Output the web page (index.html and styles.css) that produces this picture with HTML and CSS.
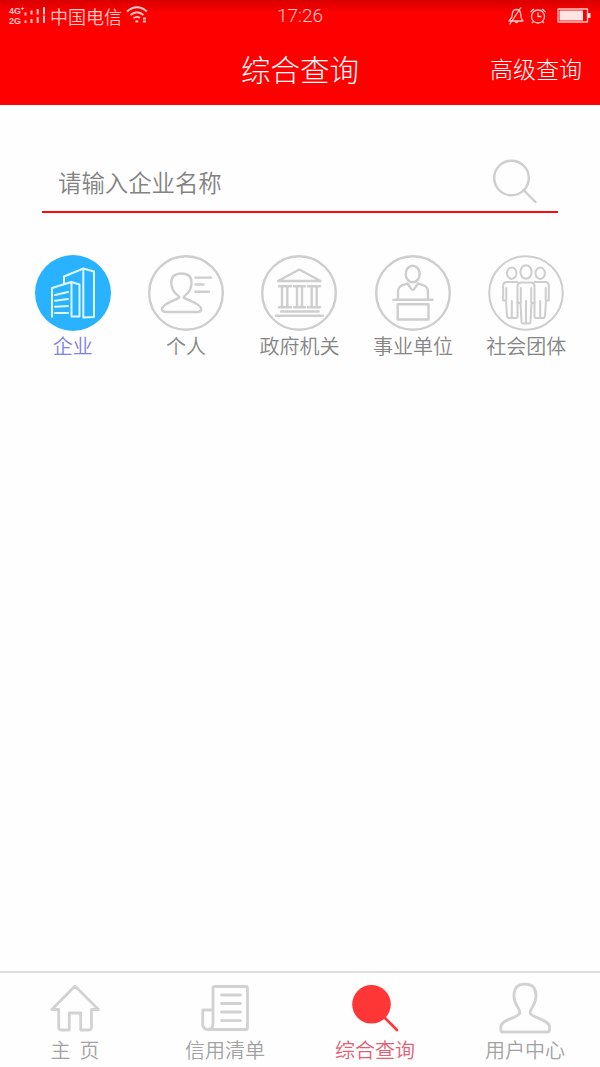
FILE: index.html
```html
<!DOCTYPE html>
<html lang="zh-CN">
    <head>
        <meta charset="UTF-8">
        <meta name="viewport" content="width=device-width, initial-scale=1.0">

        <title>综合查询</title>
        <link rel="stylesheet" href="styles.css">
    </head>
    <body>
        <div class="status-bar">
            <div class="status-left">
                <div class="network"><span>4G⁺</span><span>2G</span></div>
                <svg class="signal" width="24" height="20" viewBox="0 0 24 20">
                    <path d="M1.500 6.500v3M1.500 14.500v2.500M7.500 4.500v4M7.500 13v4M13.700 3v5.500M13.700 11v6M20 1v7.500M20 9.500v7.500"/>
                </svg>
                <span class="carrier">中国电信</span>
                <svg class="wifi" width="22" height="20" viewBox="0 0 22 20">
                    <path d="M1 5.500Q11-3 21 5.500M4.500 9Q11 3.500 17.500 9M7.500 12.300Q11 9.500 14 12"/>
                    <path d="M9.300 15.500h3M17 12.500h3M17 15.500h3"/>
                </svg>
            </div>
            <span class="time">17:26</span>
            <div class="status-right">
                <svg width="18" height="18" viewBox="0 0 18 18">
                    <path d="M2 14h14c-2-2-2.300-3-2.300-6.500C13.700 4 12 2.500 9.500 2.500S5.300 4 5.300 7.500C5.300 11 4 12 2 14zM8 14.500q1.500 2 3 0M14 .5 2.500 17.500"/>
                </svg>
                <svg width="18" height="18" viewBox="0 0 18 18">
                    <circle cx="9" cy="9.500" r="6.500"/>
                    <path d="M9 5.500v4h3.500M1.500 5 5 2M16.500 5 13 2M4.500 14.500 3 16M13.500 14.500 15 16"/>
                </svg>
                <svg class="battery" width="34" height="16" viewBox="0 0 34 16">
                    <rect x="1" y="1" width="29.500" height="13"/>
                    <path class="level" d="M2.500 2.500h23.500v10h-23.500zM31 5h2.500v5H31z"/>
                </svg>
            </div>
        </div>
        <header>
            <h1>综合查询</h1>
            <a href="#">高级查询</a>
        </header>
        <main>
            <form class="search">
                <input type="text" placeholder="请输入企业名称">
                <svg width="46" height="46" viewBox="0 0 46 46">
                    <circle cx="19.500" cy="20" r="17.300"/>
                    <path d="M31.500 32 43.500 44"/>
                </svg>
            </form>
            <ul class="types">
                <li class="active">
                    <svg width="76" height="76" viewBox="0 0 76 76">
                        <circle class="disc" cx="38" cy="38" r="38"/>
                        <path d="M29 28.300V21.500L48.300 13.500 59 16.500V62L48.300 62.500V13.500M17 61.700V33L36.300 27 44.500 29.500V61.500H36.500V27"/>
                        <path d="M20 40 33 37M20 45.700 33 44M20 51.700 33 51M20 58H33"/>
                    </svg>
                    <span>企业</span>
                </li>
                <li>
                    <svg width="76" height="76" viewBox="0 0 76 76">
                        <circle cx="38" cy="38" r="36.800"/>
                        <path d="M31.300 42.500C31.300 40 23.300 39 23.300 27.500C23.300 21.500 27 18.500 33.400 18.500S43.500 21.500 43.500 27.500C43.500 39 35.700 40 35.700 42.500C37 44.500 53.200 48 53.200 54Q53.200 57 49 57H18.500Q14 57 14 54C14 48 30 44.500 31.300 42.500z"/>
                        <path d="M47.500 22.600H63M47.500 29.500H55.500M47.500 36.700H61"/>
                    </svg>
                    <span>个人</span>
                </li>
                <li>
                    <svg width="76" height="76" viewBox="0 0 76 76">
                        <circle cx="38" cy="38" r="36.800"/>
                        <path d="M17 26 38.300 14.500 59.500 26z"/>
                        <path d="M18 31.200H30M33 31.200H44M47 31.200H59M18 52.200H30M33 52.200H44M47 52.200H59M21 31V52M26.300 31V52M36 31V52M41 31V52M50.700 31V52M55.700 31V52M20 56.500H57.700M15 60.700H62"/>
                    </svg>
                    <span>政府机关</span>
                </li>
                <li>
                    <svg width="76" height="76" viewBox="0 0 76 76">
                        <circle cx="38" cy="38" r="36.800"/>
                        <ellipse cx="37.700" cy="19" rx="7" ry="8.300"/>
                        <path d="M23 43.500V36.500C23 30 29 30 32.500 28.500L36 33.500Q37.800 36.500 39.500 33.500L43 28.500C46.500 30 53 30 53 36.500V43.500M18.500 44.700H57.500M22.700 49.200H53.500V64.500H22.700z"/>
                    </svg>
                    <span>事业单位</span>
                </li>
                <li>
                    <svg class="group" width="76" height="76" viewBox="0 0 76 76">
                        <circle cx="38" cy="38" r="36.800"/>
                        <ellipse cx="23.700" cy="18.200" rx="4.700" ry="5.700"/>
                        <ellipse cx="52.200" cy="18.200" rx="4.700" ry="5.700"/>
                        <path d="M29.500 27H18.500Q15.200 27 15.200 30.500V45.500H18L19 61Q19.200 63 21 63H28Q29.500 63 29.500 61V47M46.500 27H57.500Q60.800 27 60.800 30.500V45.500H58L57 61Q56.800 63 55 63H48Q46.500 63 46.500 61V47M18.300 33V45M23.800 46V62M57.700 33V45M52.200 46V62"/>
                        <ellipse cx="38" cy="17" rx="5.600" ry="6.700"/>
                        <path d="M33.500 27.500Q29.500 27.500 29.500 31V48H32.500L33.500 66.500Q33.600 68.500 35 68.500H41Q42.400 68.500 42.500 66.500L43.500 48H46.500V31Q46.500 27.500 42.500 27.500zM38 46V68M32.800 33V48M43.200 33V48"/>
                    </svg>
                    <span>社会团体</span>
                </li>
            </ul>
        </main>
        <nav>
            <ul>
                <li><a href="#">
                    <svg width="52" height="52" viewBox="0 0 52 52">
                        <path d="M26 4 2.800 27.500H9.700V45Q9.700 48 12.700 48H20.300V31H31.700V48H39.500Q42.500 48 42.500 45V27.500H49.500z"/>
                    </svg>
                    <span>主&nbsp; 页</span>
                </a></li>
                <li><a href="#">
                    <svg width="52" height="52" viewBox="0 0 52 52">
                        <path d="M14 42V6Q14 4.500 15.500 4.500H47Q48.500 4.500 48.500 6V46Q48.500 47.500 47 47.500H9C5 47.500 3.700 45 3.700 42V28H14M14 42Q14 47.500 9 47.500M22.500 13H41.500M22.500 21.500H41.500M22.500 30H41.500M22.500 38.700H41.500"/>
                    </svg>
                    <span>信用清单</span>
                </a></li>
                <li class="active"><a href="#">
                    <svg width="52" height="52" viewBox="0 0 52 52">
                        <circle class="disc" cx="22.500" cy="22.300" r="19.300"/>
                        <path d="M35 35 48 48"/>
                    </svg>
                    <span>综合查询</span>
                </a></li>
                <li><a href="#">
                    <svg width="52" height="52" viewBox="0 0 52 52">
                        <path d="M20.800 31C21.500 26 15 24 15 14C15 6.500 18 2.200 26 2.200S37 6.500 37 14C37 24 30.500 26 31.200 31C32 36 50.500 37 50.500 45V48Q50.500 50 48.500 50H3.800Q1.800 50 1.800 48V45C1.800 37 20 36 20.800 31z"/>
                    </svg>
                    <span>用户中心</span>
                </a></li>
            </ul>
        </nav>
    </body>
</html>
```
FILE: styles.css
```css
body {
    font-family: "Noto Sans CJK SC", sans-serif;
    font-weight: 350;
    margin: 0;
    height: 1067px;
    display: flex;
    flex-direction: column;
    background-color: #fefefe;
    overflow: hidden;
}

ul {
    list-style-type: none;
    margin: 0;
    padding: 0;
}

a {
    text-decoration: none;
}

svg {
    display: block;
    fill: none;
    stroke: #cecece;
    stroke-width: 2.4;
    stroke-linecap: round;
    stroke-linejoin: round;
}

.status-bar {
    display: grid;
    grid-template-columns: 1fr auto 1fr;
    align-items: center;
    height: 32px;
    padding: 0 9px;
    background: linear-gradient(#d80000, #ff0000 14px);
    color: #ffc9c9;
    font-size: 18px;
    line-height: 32px;
}

.status-bar svg {
    stroke: #ffc9c9;
    stroke-width: 1.3;
    stroke-linecap: butt;
}

.status-left,
.status-right {
    display: flex;
    align-items: center;
}

.status-right {
    justify-content: flex-end;
    gap: 4px;
    height: 30px;
}

.network {
    display: flex;
    flex-direction: column;
    width: 15px;
    padding-bottom: 1px;
    font-family: "Liberation Sans", sans-serif;
    font-size: 9px;
    font-weight: bold;
    line-height: 10px;
}

.status-bar .signal {
    height: 22px;
    stroke-width: 2;
}

.carrier {
    height: 32px;
    margin: 0 4px 0 2px;
    line-height: 32px;
}

.status-bar .wifi {
    stroke-width: 1.8;
}

.time {
    font-family: Roboto, sans-serif;
    font-size: 19px;
    font-weight: 300;
}

.battery .level {
    fill: #ffe4e4;
    stroke: none;
}

.status-right .battery {
    margin-left: 6px;
}

header {
    display: grid;
    grid-template-columns: 1fr auto 1fr;
    align-items: center;
    height: 71px;
    padding: 0 18px 2px;
    background-color: #ff0000;
    color: white;
    font-weight: 300;
}

header h1 {
    grid-column: 2;
    margin: 0;
    font-size: 29.500px;
    font-weight: 300;
}

header a {
    justify-self: end;
    color: white;
    font-size: 23px;
}

main {
    flex: 1;
}

.search {
    display: flex;
    height: 53px;
    margin: 53px 42px 0;
    padding-right: 20px;
    border-bottom: 2px solid #ff0a0a;
}

.search input {
    flex: 1;
    min-width: 0;
    height: 48px;
    padding: 0 0 0 16px;
    border: none;
    outline: none;
    background: none;
    font-family: inherit;
    font-size: 23.400px;
    font-weight: 350;
}

.search input::placeholder {
    color: #828282;
}

.types {
    display: grid;
    grid-template-columns: repeat(5, 1fr);
    margin-top: 42px;
    padding: 0 17px 0 16px;
}

.types li {
    display: flex;
    flex-direction: column;
    align-items: center;
    color: #858585;
    font-size: 20px;
    line-height: 30px;
}

.types .active {
    color: #8080ee;
}

.types .active svg {
    stroke: #e0f7ff;
    stroke-width: 2;
}

.types .active .disc {
    fill: #28b2ff;
    stroke: none;
}

.types .group {
    stroke-width: 2;
}

nav {
    height: 94px;
    border-top: 2px solid #e0e0e0;
}

nav ul {
    display: grid;
    grid-template-columns: repeat(4, 1fr);
}

nav a {
    display: flex;
    flex-direction: column;
    align-items: center;
    padding-top: 9px;
    color: #a2a2a2;
    font-size: 20px;
    line-height: 32px;
}

nav svg {
    stroke: #d2d2d2;
    stroke-width: 2.8;
}

nav .active a {
    color: #e45f74;
}

nav .active svg {
    stroke: #ff3636;
}

nav .active .disc {
    fill: #ff3636;
    stroke: none;
}
```
